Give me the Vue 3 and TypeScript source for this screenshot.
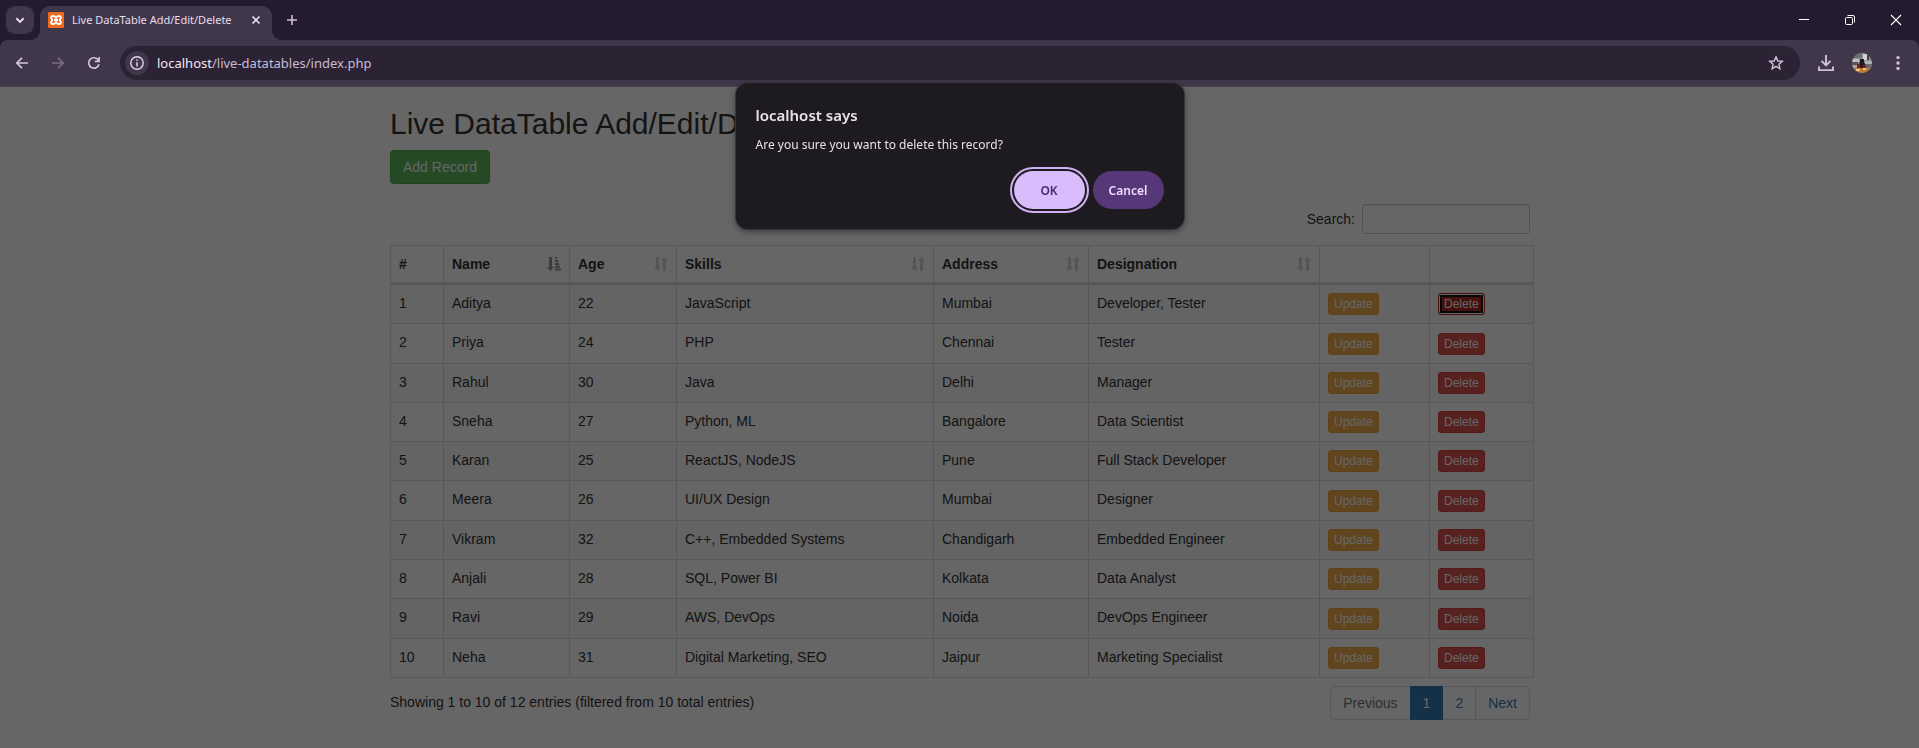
<script setup lang="ts">
import { ref } from 'vue'

interface Employee {
  id: number
  name: string
  age: number
  skills: string
  address: string
  designation: string
}

interface Column {
  title: string
  sort: 'none' | 'both' | 'asc'
}

const columns: Column[] = [
  { title: '#', sort: 'none' },
  { title: 'Name', sort: 'asc' },
  { title: 'Age', sort: 'both' },
  { title: 'Skills', sort: 'both' },
  { title: 'Address', sort: 'both' },
  { title: 'Designation', sort: 'both' },
]

const rows: Employee[] = [
  { id: 1, name: 'Aditya', age: 22, skills: 'JavaScript', address: 'Mumbai', designation: 'Developer, Tester' },
  { id: 2, name: 'Priya', age: 24, skills: 'PHP', address: 'Chennai', designation: 'Tester' },
  { id: 3, name: 'Rahul', age: 30, skills: 'Java', address: 'Delhi', designation: 'Manager' },
  { id: 4, name: 'Sneha', age: 27, skills: 'Python, ML', address: 'Bangalore', designation: 'Data Scientist' },
  { id: 5, name: 'Karan', age: 25, skills: 'ReactJS, NodeJS', address: 'Pune', designation: 'Full Stack Developer' },
  { id: 6, name: 'Meera', age: 26, skills: 'UI/UX Design', address: 'Mumbai', designation: 'Designer' },
  { id: 7, name: 'Vikram', age: 32, skills: 'C++, Embedded Systems', address: 'Chandigarh', designation: 'Embedded Engineer' },
  { id: 8, name: 'Anjali', age: 28, skills: 'SQL, Power BI', address: 'Kolkata', designation: 'Data Analyst' },
  { id: 9, name: 'Ravi', age: 29, skills: 'AWS, DevOps', address: 'Noida', designation: 'DevOps Engineer' },
  { id: 10, name: 'Neha', age: 31, skills: 'Digital Marketing, SEO', address: 'Jaipur', designation: 'Marketing Specialist' },
]

const search = ref('')
const pendingId = ref(1)
</script>

<template>
  <div class="browser">
    <header class="chrome">
      <div class="tabstrip">
        <button class="tab-search" type="button" aria-label="Search tabs">
          <svg width="12" height="12" viewBox="0 0 12 12"><path d="M2.3 4.2 6 7.9l3.7-3.7" fill="none" stroke="#e6dcee" stroke-width="2" /></svg>
        </button>
        <div class="tab">
          <svg class="favicon" width="16" height="16" viewBox="0 0 16 16">
            <rect width="16" height="16" rx="1" fill="#ee6a1c" />
            <path d="M8 6C7 3.400 3.200 3.200 3.200 5.600c0 1.400 1 1.400 1 2.400s-1 1-1 2.400c0 2.400 3.800 2.200 4.800-.4 1 2.600 4.800 2.800 4.800.4 0-1.400-1-1.400-1-2.400s1-1 1-2.400C12.800 3.200 9 3.400 8 6ZM6 8h4" fill="none" stroke="#fff" stroke-width="2" stroke-linejoin="round" />
          </svg>
          <span class="tab-title">Live DataTable Add/Edit/Delete</span>
          <button class="tab-close" type="button" aria-label="Close tab">
            <svg width="10" height="10" viewBox="0 0 10 10"><path d="m1.500 1.500 7 7m0-7-7 7" stroke="#e6dcee" stroke-width="1.600" /></svg>
          </button>
        </div>
        <button class="new-tab" type="button" aria-label="New tab">
          <svg width="12" height="12" viewBox="0 0 12 12"><path d="M6 1v10M1 6h10" stroke="#cbbdd8" stroke-width="1.600" /></svg>
        </button>
        <div class="window-controls">
          <button type="button" aria-label="Minimize">
            <svg width="12" height="12" viewBox="0 0 12 12"><path d="M1 5.500h10" stroke="#fff" /></svg>
          </button>
          <button type="button" aria-label="Restore">
            <svg width="12" height="12" viewBox="0 0 12 12" fill="none" stroke="#fff"><rect x="1.500" y="3.500" width="7" height="7" rx="1.200" /><path d="M3.500 1.500H9a1.500 1.500 0 0 1 1.500 1.500v5.500" /></svg>
          </button>
          <button type="button" aria-label="Close">
            <svg width="12" height="12" viewBox="0 0 12 12"><path d="m1 1 10 10M11 1 1 11" stroke="#fff" stroke-width="1.100" /></svg>
          </button>
        </div>
      </div>

      <div class="toolbar">
        <button class="tool" type="button" aria-label="Back">
          <svg width="16" height="16" viewBox="0 0 16 16"><path d="M14 8H3M8 2.800 2.800 8 8 13.200" fill="none" stroke="#d3c5df" stroke-width="1.700" /></svg>
        </button>
        <button class="tool" type="button" aria-label="Forward" disabled>
          <svg width="16" height="16" viewBox="0 0 16 16"><path d="M2 8h11M8 2.800 13.200 8 8 13.200" fill="none" stroke="#796c84" stroke-width="1.700" /></svg>
        </button>
        <button class="tool" type="button" aria-label="Reload">
          <svg width="16" height="16" viewBox="0 0 16 16"><path d="M13 9.200A5.200 5.200 0 1 1 12.300 5.100L13 6M13.100 2v4.300H8.800" fill="none" stroke="#d3c5df" stroke-width="1.700" /></svg>
        </button>
        <div class="omnibox">
          <button class="site-info" type="button" aria-label="View site information">
            <svg width="16" height="16" viewBox="0 0 16 16"><circle cx="8" cy="8" r="6.200" fill="none" stroke="#e0d6e8" stroke-width="1.400" /><path d="M8 7.200v4.200M8 4.500v1.600" stroke="#e0d6e8" stroke-width="1.500" /></svg>
          </button>
          <span class="url"><b>localhost</b>/live-datatables/index.php</span>
          <button class="star" type="button" aria-label="Bookmark this tab">
            <svg width="16" height="16" viewBox="0 0 16 16"><path d="m8 1.900 1.800 4.100 4.500.4-3.400 2.900 1 4.400L8 11.400l-3.900 2.300 1-4.400-3.400-2.900 4.500-.4Z" fill="none" stroke="#d3c5df" stroke-width="1.400" /></svg>
          </button>
        </div>
        <button class="tool" type="button" aria-label="Downloads">
          <svg width="18" height="18" viewBox="0 0 18 18"><path d="M9 1v10M4.500 6.800 9 11.300l4.500-4.500M2 12.500v3.600h14v-3.600" fill="none" stroke="#cfc1dc" stroke-width="1.900" /></svg>
        </button>
        <button class="tool" type="button" aria-label="Profile">
          <svg width="20" height="20" viewBox="0 0 20 20">
            <clipPath id="face"><circle cx="10" cy="10" r="10" /></clipPath>
            <g clip-path="url(#face)">
              <rect width="20" height="20" fill="#8f9298" />
              <path d="M2 0h8v5H2z" fill="#65707a" />
              <path d="M11 1h4v6h-4z" fill="#d6d3cc" />
              <path d="M15 2h2v5h-2z" fill="#3c4048" />
              <path d="M0 6h7v3H0z" fill="#bfc1c0" />
              <path d="M0 9h6v3H0z" fill="#59534f" />
              <path d="M13 8h7v3h-7z" fill="#aeb2b8" />
              <path d="M14 11h6v4h-6z" fill="#6b6a70" />
              <path d="M0 12h5v3H0z" fill="#a9a39c" />
              <path d="M8 6h4v3l2 4H6l2-4z" fill="#24171d" />
              <path d="M5 11h3v4H5zM11 12h3v3h-3z" fill="#7a1f28" />
              <path d="M8 12h3v3H8z" fill="#3a1a1d" />
              <path d="M0 15h20v5H0z" fill="#b87a35" />
              <path d="M4 16h4v2H4zM11 15h3v2h-3z" fill="#f0c879" />
            </g>
          </svg>
        </button>
        <button class="tool" type="button" aria-label="Menu">
          <svg width="16" height="16" viewBox="0 0 16 16" fill="#cfc1dc"><circle cx="8" cy="2.600" r="1.700" /><circle cx="8" cy="8" r="1.700" /><circle cx="8" cy="13.400" r="1.700" /></svg>
        </button>
      </div>
    </header>

    <div class="viewport">
      <main class="container">
        <h1>Live DataTable Add/Edit/Delete</h1>
        <button class="btn-add" type="button">Add Record</button>

        <div class="filter">
          <label for="search">Search:</label>
          <input id="search" v-model="search" type="search" />
        </div>

        <div class="table-wrap">
          <table>
            <colgroup>
              <col class="c-id" /><col class="c-name" /><col class="c-age" /><col class="c-skills" />
              <col class="c-address" /><col class="c-role" /><col class="c-update" /><col class="c-delete" />
            </colgroup>
            <thead>
              <tr>
                <th v-for="col in columns" :key="col.title" scope="col">
                  <div class="th-inner">
                    {{ col.title }}
                    <svg v-if="col.sort === 'asc'" class="sort active" width="14" height="14" viewBox="0 0 14 14">
                      <path d="M2 0h3v10h2L3.500 14 0 10h2zM8 0h2v2H8zM8 3h3.500v2H8zM8 6h4v2H8zM8 8.700h5v2H8zM8 11.400h6v2.100H8z" />
                    </svg>
                    <svg v-else-if="col.sort === 'both'" class="sort" width="14" height="14" viewBox="0 0 14 14">
                      <path d="M2 0h3v10h2L3.500 14 0 10h2zM9 14h3V4h2L10.500 0 7 4h2z" />
                    </svg>
                  </div>
                </th>
                <th></th>
                <th></th>
              </tr>
            </thead>
            <tbody>
              <tr v-for="row in rows" :key="row.id">
                <td>{{ row.id }}</td>
                <td>{{ row.name }}</td>
                <td>{{ row.age }}</td>
                <td>{{ row.skills }}</td>
                <td>{{ row.address }}</td>
                <td>{{ row.designation }}</td>
                <td><button class="btn-xs warning" type="button">Update</button></td>
                <td><button class="btn-xs danger" :class="{ pressed: row.id === pendingId }" type="button">Delete</button></td>
              </tr>
            </tbody>
          </table>
        </div>

        <div class="table-footer">
          <p class="info" role="status">Showing 1 to 10 of 12 entries (filtered from 10 total entries)</p>
          <nav class="pagination" aria-label="Table pages">
            <a class="disabled" href="#">Previous</a>
            <a class="current" href="#" aria-current="page">1</a>
            <a href="#">2</a>
            <a href="#">Next</a>
          </nav>
        </div>
      </main>
      <div class="scrim"></div>
    </div>

    <div class="dialog-layer">
      <section class="dialog" role="alertdialog" aria-labelledby="dlg-title" aria-describedby="dlg-text">
        <h2 id="dlg-title">localhost says</h2>
        <p id="dlg-text">Are you sure you want to delete this record?</p>
        <div class="dialog-actions">
          <button class="ok" type="button">OK</button>
          <button class="cancel" type="button">Cancel</button>
        </div>
      </section>
    </div>
  </div>
</template>

<style>
body {
  margin: 0;
  background: #666;
}
</style>

<style scoped>
* {
  box-sizing: border-box;
}

button {
  margin: 0;
  padding: 0;
  border: 0;
  background: none;
  font: inherit;
  color: inherit;
}

svg {
  display: block;
  flex: none;
}

.browser {
  display: flex;
  flex-direction: column;
  min-height: 100vh;
  font-family: "Noto Sans", "Open Sans", sans-serif;
}

.chrome {
  background: #241c2e;
}

.tabstrip {
  display: flex;
  align-items: flex-start;
  height: 40px;
  padding: 6px 0 0 6px;
  color: #e6dcee;
}

.tab-search {
  display: grid;
  place-items: center;
  width: 28px;
  height: 28px;
  border-radius: 9px;
  background: #41374a;
}

.tab {
  position: relative;
  display: flex;
  align-items: center;
  width: 232px;
  height: 34px;
  margin-left: 6px;
  padding: 0 8px 6px;
  border-radius: 10px 10px 0 0;
  background: #41374a;
}

.tab::before,
.tab::after {
  content: "";
  position: absolute;
  bottom: 0;
  width: 10px;
  height: 10px;
}

.tab::before {
  right: 100%;
  background: radial-gradient(circle at 0 0, transparent 10px, #41374a 10px);
}

.tab::after {
  left: 100%;
  background: radial-gradient(circle at 100% 0, transparent 10px, #41374a 10px);
}

.tab-title {
  flex: 1;
  margin-left: 8px;
  font-size: 11px;
  line-height: 16px;
  white-space: nowrap;
}

.tab-close {
  display: grid;
  place-items: center;
  width: 16px;
  height: 16px;
}

.new-tab {
  display: grid;
  place-items: center;
  width: 28px;
  height: 28px;
  margin-left: 6px;
}

.window-controls {
  display: flex;
  margin-left: auto;
}

.window-controls button {
  display: grid;
  place-items: center;
  width: 46px;
  height: 28px;
}

.toolbar {
  display: flex;
  align-items: center;
  height: 47px;
  padding: 0 3px 0 4px;
  border-bottom: 1px solid #4d4258;
  border-radius: 8px 8px 0 0;
  background: #41374a;
}

.tool {
  display: grid;
  place-items: center;
  width: 36px;
  height: 34px;
}

.omnibox {
  display: flex;
  flex: 1;
  align-items: center;
  height: 34px;
  margin: 0 8px;
  padding: 0 12px 0 5px;
  border-radius: 17px;
  background: #2b2233;
}

.site-info {
  display: grid;
  place-items: center;
  width: 24px;
  height: 24px;
  border-radius: 50%;
  background: #41374a;
}

.url {
  flex: 1;
  margin-left: 8px;
  font-size: 13px;
  line-height: 20px;
  color: #c9bdd3;
}

.url b {
  font-weight: 400;
  color: #f0e6f7;
}

.star {
  display: grid;
  place-items: center;
  width: 24px;
  height: 24px;
}

.viewport {
  position: relative;
  flex: 1;
  overflow: hidden;
  background: #fff;
  color: #333;
  font-family: "Liberation Sans", Arial, sans-serif;
  font-size: 14px;
  line-height: 20px;
}

.scrim {
  position: absolute;
  z-index: 2;
  inset: 0;
  background: rgba(0, 0, 0, 0.6);
}

.container {
  max-width: 1169px;
  margin: 0 auto;
  padding: 0 14px 0 15px;
}

h1 {
  margin: 20px 0 10px;
  font-size: 30px;
  font-weight: 400;
  line-height: 33px;
}

.btn-add {
  display: block;
  height: 34px;
  padding: 0 12px;
  border: 1px solid #4cae4c;
  border-radius: 4px;
  background: #5cb85c;
  color: #fff;
}

.filter {
  display: flex;
  align-items: center;
  justify-content: flex-end;
  gap: 7px;
  margin: 20px 0 11px;
}

.filter input {
  width: 168px;
  height: 30px;
  padding: 5px 10px;
  border: 1px solid #ccc;
  border-radius: 3px;
  background: #fff;
  font: inherit;
  font-size: 12px;
  box-shadow: inset 0 1px 1px rgba(0, 0, 0, 0.075);
}

.table-wrap {
  margin-right: -4px;
}

table {
  width: 100%;
  table-layout: fixed;
  border: 1px solid #ddd;
  border-right: 0;
  border-collapse: separate;
  border-spacing: 0;
}

.c-id { width: 53px; }
.c-name { width: 126px; }
.c-age { width: 107px; }
.c-skills { width: 257px; }
.c-address { width: 155px; }
.c-role { width: 231px; }
.c-update { width: 110px; }
.c-delete { width: 104px; }

th,
td {
  padding: 8px;
  border-right: 1px solid #ddd;
  text-align: left;
  vertical-align: top;
}

th {
  border-bottom: 2px solid #ddd;
}

td {
  border-top: 1px solid #ddd;
}

tbody tr:nth-child(odd) {
  background: #f9f9f9;
}

.th-inner {
  display: flex;
  align-items: center;
  justify-content: space-between;
}

.sort {
  fill: #333;
  opacity: 0.2;
}

.sort.active {
  opacity: 0.5;
}

.btn-xs {
  display: inline-block;
  padding: 1px 5px;
  border: 1px solid;
  border-radius: 3px;
  color: #fff;
  font-size: 12px;
  line-height: 18px;
  vertical-align: middle;
}

.warning {
  border-color: #eea236;
  background: #f0ad4e;
}

.danger {
  border-color: #d43f3a;
  background: #d9534f;
}

.pressed {
  border-color: #ac2925;
  background: #ac2925;
  box-shadow: inset 0 0 0 1px #fff, inset 0 0 0 3px #101010;
}

.table-footer {
  display: flex;
  align-items: flex-start;
  justify-content: space-between;
  padding: 8px 0 2px;
}

.info {
  margin: 6px 0 0;
}

.pagination {
  display: flex;
}

.pagination a {
  padding: 6px 12px;
  border: 1px solid #ddd;
  margin-left: -1px;
  background: #fff;
  color: #337ab7;
  text-decoration: none;
}

.pagination a:first-child {
  margin-left: 0;
  border-radius: 4px 0 0 4px;
}

.pagination a:last-child {
  border-radius: 0 4px 4px 0;
}

.pagination .disabled {
  color: #777;
}

.pagination .current {
  z-index: 1;
  border-color: #337ab7;
  background: #337ab7;
  color: #fff;
}

.dialog-layer {
  position: fixed;
  z-index: 3;
  inset: 83px 0 auto;
  display: flex;
  justify-content: center;
}

.dialog {
  width: 448px;
  padding: 20px;
  border-radius: 12px;
  background: #1e1b20;
  color: #e8e0eb;
  box-shadow: 0 0 0 1px #39343d, 0 2px 6px rgba(0, 0, 0, 0.5);
}

.dialog h2 {
  margin: 0;
  font-size: 15px;
  font-weight: 600;
  line-height: 24px;
}

.dialog p {
  margin: 8px 0 16px;
  font-size: 12px;
  line-height: 20px;
}

.dialog-actions {
  display: flex;
  justify-content: flex-end;
  gap: 8px;
}

.dialog-actions button {
  width: 71px;
  height: 38px;
  border-radius: 19px;
  font-size: 12px;
  font-weight: 600;
}

.ok {
  background: #d9bcfb;
  color: #46286b;
  outline: 2px solid #d0b0f5;
  outline-offset: 2px;
}

.cancel {
  background: #563778;
  color: #efdcff;
}
</style>
